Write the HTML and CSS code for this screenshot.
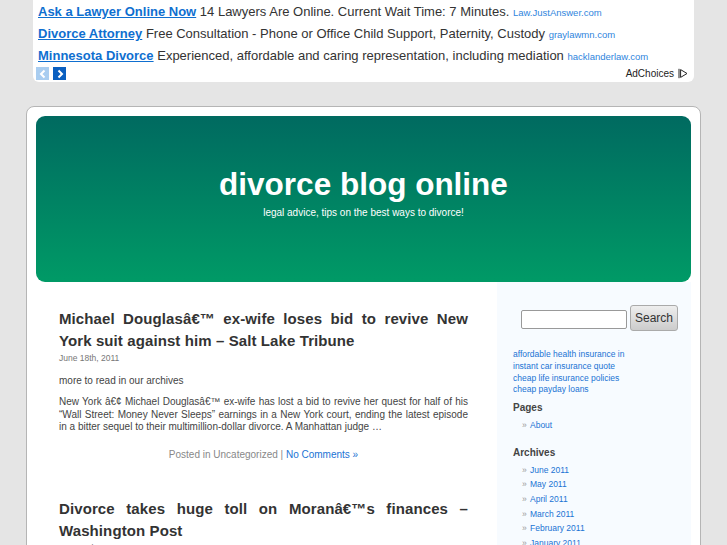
FILE: index.html
```html
<!DOCTYPE html>
<html lang="en">
<head>
  <meta charset="UTF-8">
  <title>divorce blog online</title>
  <link rel="stylesheet" href="styles.css">
</head>
<body>
<div class="ads">
  <div class="ad"><a class="ad-title" href="#">Ask a Lawyer Online Now</a> 14 Lawyers Are Online. Current Wait Time: 7 Minutes. <a class="ad-url" href="#">Law.JustAnswer.com</a></div>
  <div class="ad"><a class="ad-title" href="#">Divorce Attorney</a> Free Consultation - Phone or Office Child Support, Paternity, Custody <a class="ad-url" href="#">graylawmn.com</a></div>
  <div class="ad"><a class="ad-title" href="#">Minnesota Divorce</a> Experienced, affordable and caring representation, including mediation <a class="ad-url" href="#">hacklanderlaw.com</a></div>
  <div class="ad-foot">
    <div class="ad-nav">
      <span class="ad-btn off"><svg width="10" height="10" viewBox="0 0 10 10"><path d="M6.5 1.5L3 5l3.5 3.5" fill="none" stroke="#fff" stroke-width="2"/></svg></span>
      <span class="ad-btn"><svg width="10" height="10" viewBox="0 0 10 10"><path d="M3.5 1.5L7 5 3.5 8.5" fill="none" stroke="#fff" stroke-width="2"/></svg></span>
    </div>
    <div class="adchoices">AdChoices <svg width="10" height="11" viewBox="0 0 10 11"><path d="M1 .8v9.4" fill="none" stroke="#222" stroke-width="1"/><path d="M2.6 1.6L9 5.5 2.6 9.4z" fill="none" stroke="#222" stroke-width="1"/></svg></div>
  </div>
</div>

<div class="wrapper">
  <div class="header">
    <h1>divorce blog online</h1>
    <p>legal advice, tips on the best ways to divorce!</p>
  </div>
  <div class="columns">
    <div class="content">
      <div class="post">
        <h2>Michael Douglasâ€™ ex-wife loses bid to revive New York suit against him – Salt Lake Tribune</h2>
        <div class="date">June 18th, 2011</div>
        <p>more to read in our archives</p>
        <p class="just">New York â€¢ Michael Douglasâ€™ ex-wife has lost a bid to revive her quest for half of his “Wall Street: Money Never Sleeps” earnings in a New York court, ending the latest episode in a bitter sequel to their multimillion-dollar divorce. A Manhattan judge …</p>
        <div class="meta">Posted in Uncategorized | <a href="#">No Comments »</a></div>
      </div>
      <div class="post">
        <h2>Divorce takes huge toll on Moranâ€™s finances – Washington Post</h2>
        <div class="date">June 18th, 2011</div>
      </div>
    </div>
    <div class="sidebar">
      <form class="search">
        <input type="text">
        <button type="button">Search</button>
      </form>
      <div class="links">
        <a href="#">affordable health insurance in</a>
        <a href="#">instant car insurance quote</a>
        <a href="#">cheap life insurance policies</a>
        <a href="#">cheap payday loans</a>
      </div>
      <h3>Pages</h3>
      <ul>
        <li><a href="#">About</a></li>
      </ul>
      <h3>Archives</h3>
      <ul>
        <li><a href="#">June 2011</a></li>
        <li><a href="#">May 2011</a></li>
        <li><a href="#">April 2011</a></li>
        <li><a href="#">March 2011</a></li>
        <li><a href="#">February 2011</a></li>
        <li><a href="#">January 2011</a></li>
      </ul>
    </div>
  </div>
</div>
</body>
</html>
```

FILE: styles.css
```css
* {
  box-sizing: border-box;
}
html, body {
  height: 545px;
  overflow: hidden;
}
body {
  margin: 0;
  background-color: #e5e5e5;
  color: #333;
  font-family: "Liberation Sans", Arial, sans-serif;
}
a {
  color: #1a73d4;
  text-decoration: none;
}
.ads {
  width: 661px;
  height: 82px;
  margin-left: 33px;
  padding: 1px 5px 0;
  background: #fff;
  border-radius: 0 0 6px 6px;
}
.ad {
  height: 22px;
  font-size: 13px;
  line-height: 22px;
  white-space: nowrap;
  color: #333;
}
.ad-title {
  color: #0f6fd0;
  font-weight: bold;
  text-decoration: underline;
}
.ad-url {
  color: #2f85dd;
  font-size: 9.5px;
}
.ad-foot {
  display: flex;
  justify-content: space-between;
  align-items: center;
  margin-left: -2px;
  margin-right: 1px;
  height: 13px;
}
.ad-nav {
  display: flex;
  gap: 4px;
}
.ad-btn {
  display: flex;
  align-items: center;
  justify-content: center;
  width: 13px;
  height: 13px;
  background: #0a5fc0;
}
.ad-btn.off {
  background: #a9cdf0;
}
.adchoices {
  display: flex;
  align-items: center;
  gap: 4px;
  font-size: 10px;
  color: #222;
}
.wrapper {
  width: 675px;
  height: 600px;
  margin: 24px 0 0 26px;
  padding: 9px;
  background: #fff;
  border: 1px solid #b5b5b5;
  border-radius: 8px;
}
.header {
  height: 166px;
  padding-top: 49px;
  border-radius: 9px;
  text-align: center;
  color: #fff;
  background: linear-gradient(to bottom, #006a60, #009a66);
}
.header h1 {
  margin: 0;
  font-size: 31.5px;
  line-height: 38px;
  font-weight: bold;
}
.header p {
  margin: 4px 0 0;
  font-size: 10px;
  line-height: 12px;
}
.columns {
  display: flex;
}
.content {
  width: 461px;
  padding: 26px 29px 0 23px;
}
.sidebar {
  width: 194px;
  padding: 23px 0 0 16px;
  background: #f7fbff;
  font-size: 8.5px;
}
.post {
  margin-bottom: 37px;
}
.post h2 {
  margin: 0;
  font-size: 15px;
  line-height: 22px;
  font-weight: bold;
  letter-spacing: 0.1px;
  text-align: justify;
  color: #333;
}
.date {
  margin-top: 1px;
  font-size: 8.5px;
  line-height: 10px;
  color: #777;
}
.post p {
  margin: 11px 0 0;
  font-size: 10px;
  line-height: 13px;
  color: #444;
}
.post p.just {
  margin-top: 9px;
  line-height: 12.5px;
  text-align: justify;
}
.meta {
  margin-top: 14px;
  font-size: 10px;
  line-height: 13px;
  text-align: center;
  color: #888;
}
.search {
  display: flex;
  align-items: center;
  gap: 3px;
  margin-left: 8px;
}
.search input {
  width: 106px;
  height: 19px;
  margin: 3px 0 0;
  border: 1px solid #999;
  border-radius: 2px;
  background: #fff;
}
.search button {
  width: 48px;
  height: 26px;
  padding: 0;
  font-family: inherit;
  font-size: 12px;
  color: #333;
  background: linear-gradient(to bottom, #eee, #ccc);
  border: 1px solid #aaa;
  border-radius: 3px;
}
.links {
  margin-top: 18px;
  line-height: 11.8px;
}
.links a {
  display: block;
}
.sidebar h3 {
  margin: 5px 0 0;
  font-size: 10px;
  line-height: 14px;
  font-weight: bold;
  color: #444;
}
.sidebar ul {
  margin: 3px 0 13px;
  padding: 0;
  list-style: none;
}
.sidebar li {
  padding-left: 17px;
  position: relative;
  line-height: 14.6px;
}
.sidebar li::before {
  content: "»";
  position: absolute;
  left: 9px;
  color: #999;
}
```
